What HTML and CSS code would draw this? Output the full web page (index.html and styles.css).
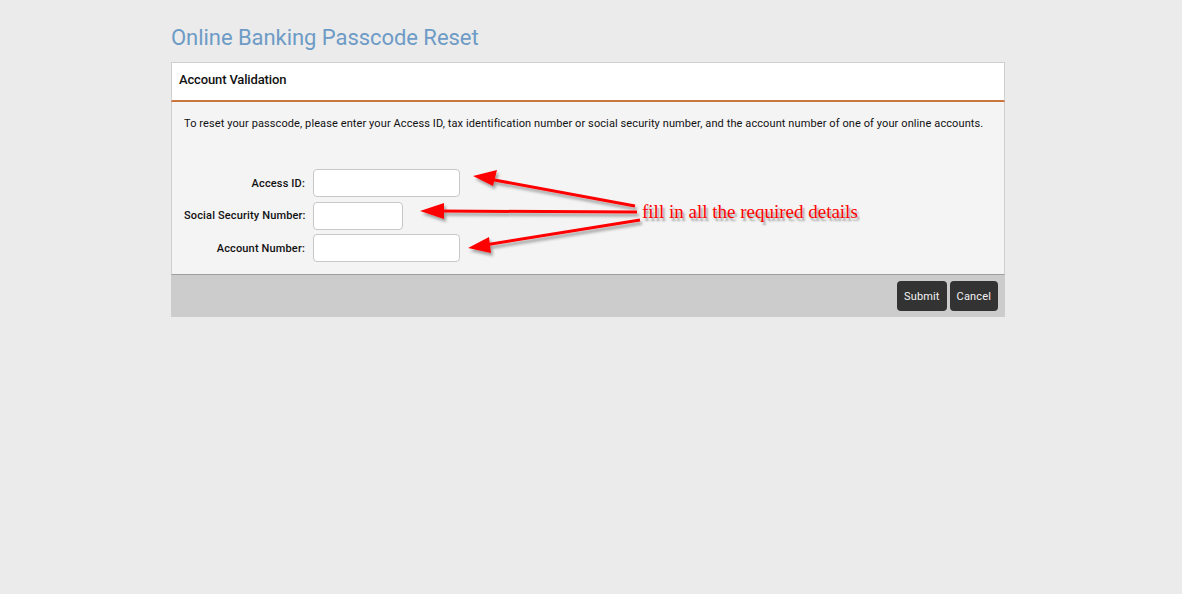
FILE: index.html
```html
<!DOCTYPE html>
<html lang="en">
<head>
  <meta charset="UTF-8" />
  <title>Online Banking Passcode Reset</title>
  <link rel="stylesheet" href="styles.css">
</head>
<body>
  <div class="page">
    <h1>Online Banking Passcode Reset</h1>
    <div class="card">
      <div class="card-head">Account Validation</div>
      <div class="card-body">
        <p class="intro">To reset your passcode, please enter your Access ID, tax identification number or social security number, and the account number of one of your online accounts.</p>
        <form class="fields">
          <label for="accessId">Access ID:</label>
          <input type="text" id="accessId" class="wide">

          <label for="ssn">Social Security Number:</label>
          <input type="text" id="ssn" class="short">

          <label for="acct">Account Number:</label>
          <input type="text" id="acct" class="wide">
        </form>
      </div>
      <div class="card-foot">
        <button type="button">Submit</button>
        <button type="button">Cancel</button>
      </div>

      <!-- annotation drawn over the screenshot -->
      <svg class="note" width="834" height="255" viewBox="0 0 834 255">
        <defs>
          <filter id="shadow" x="-10%" y="-50%" width="120%" height="200%">
            <feDropShadow dx="2" dy="3" stdDeviation="1.5" flood-color="#000" flood-opacity="0.35"/>
          </filter>
        </defs>
        <g fill="#ff0000" stroke="#ff0000" filter="url(#shadow)">
          <line x1="464" y1="144" x2="318" y2="117" stroke-width="3"/>
          <polygon points="302,114 326,108 322,124" stroke="none"/>
          <line x1="466" y1="150" x2="268" y2="149" stroke-width="3"/>
          <polygon points="249,149 273,141 273,157" stroke="none"/>
          <line x1="469" y1="158" x2="314" y2="183" stroke-width="3"/>
          <polygon points="297,186 318,175 320,191" stroke="none"/>
        </g>
      </svg>
      <span class="note-text">fill in all the required details</span>
    </div>
  </div>
</body>
</html>
```

FILE: styles.css
```css
body {
  margin: 0;
  background: #ebebeb;
  font-family: Roboto, "Liberation Sans", sans-serif;
  color: #111;
}
.page {
  width: 834px;
  margin-left: 171px;
  padding-top: 23px;
}
h1 {
  margin: 0 0 9px;
  font-size: 22px;
  line-height: 30px;
  font-weight: 400;
  letter-spacing: -0.05px;
  color: #6d9bc6;
}
.card {
  position: relative;
}
.card-head {
  background: #fff;
  border: 1px solid #cfcfcf;
  border-bottom: 2px solid #c9763f;
  padding: 0 0 5px 7px;
  height: 32px;
  display: flex;
  align-items: center;
  font-size: 13px;
  font-weight: 500;
  letter-spacing: -0.15px;
}
.card-body {
  background: #f4f4f4;
  border-left: 1px solid #cfcfcf;
  border-right: 1px solid #cfcfcf;
  border-bottom: 1px solid #9e9e9e;
  height: 173px;
  padding: 15px 12px 0;
  box-sizing: border-box;
}
.intro {
  margin: 0;
  font-size: 11px;
  line-height: 14px;
  letter-spacing: 0.1px;
}
.fields {
  display: grid;
  grid-template-columns: 121px auto;
  column-gap: 8px;
  row-gap: 4.5px;
  align-items: center;
  margin-top: 38px;
}
label {
  text-align: right;
  font-size: 11px;
  font-weight: 500;
  letter-spacing: 0.15px;
  white-space: nowrap;
}
input {
  height: 28px;
  box-sizing: border-box;
  border: 1px solid #c8c8c8;
  border-radius: 4px;
  background: #fff;
}
.wide { width: 147px; }
.short { width: 90px; }
.card-foot {
  background: #cccccc;
  height: 42px;
  display: flex;
  justify-content: flex-end;
  align-items: center;
  gap: 3px;
  padding-right: 7px;
}
button {
  height: 30px;
  padding: 0 7px;
  background: #333333;
  color: #f2f2f2;
  border: none;
  border-radius: 4px;
  font-family: Roboto, "Liberation Sans", sans-serif;
  font-size: 11px;
  letter-spacing: 0.15px;
}
.note {
  position: absolute;
  left: 0;
  top: 0;
}
.note-text {
  position: absolute;
  left: 471px;
  top: 139px;
  font-family: "Liberation Serif", serif;
  font-size: 19px;
  color: #ff0000;
  text-shadow: 2px 3px 2px rgba(0,0,0,0.35);
  white-space: nowrap;
}
```
